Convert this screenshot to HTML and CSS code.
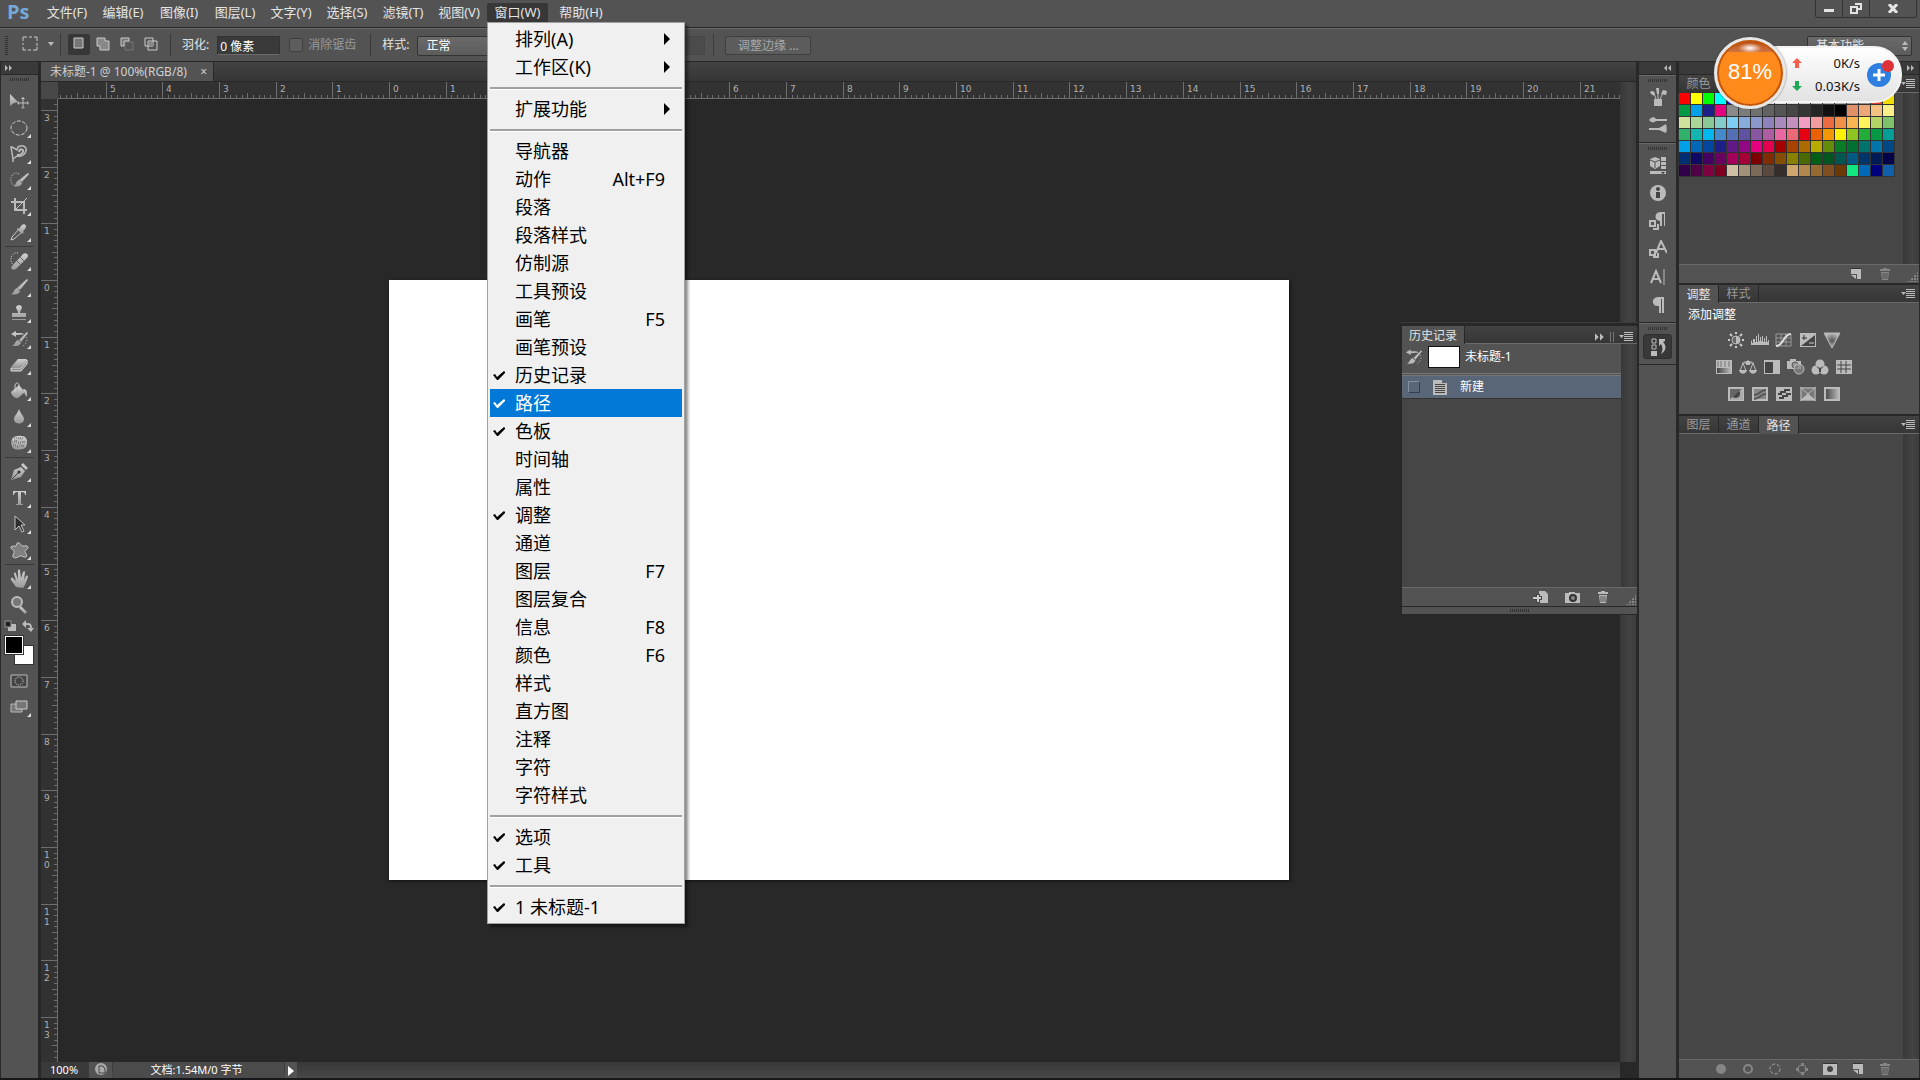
FILE: index.html
```
<!DOCTYPE html>
<html lang="zh-CN">
<head>
  <meta charset="UTF-8" />
  <title>未标题-1 @ 100%(RGB/8)</title>
  <meta name="viewport" content="width=device-width, initial-scale=1.0" />
  <link rel="stylesheet" href="styles.css">
</head>
<body>
  <!-- Shared icons -->
  <svg class="defs" aria-hidden="true">
    <defs>
      <linearGradient id="metal" x1="0" y1="0" x2="0" y2="1"><stop offset="0" stop-color="#d2d2d2"/><stop offset="1" stop-color="#999"/></linearGradient>
      <linearGradient id="fade" x1="0" y1="0" x2="1" y2="0"><stop offset="0" stop-color="#444"/><stop offset="1" stop-color="#bbb"/></linearGradient>
      <radialGradient id="spot"><stop offset="0" stop-color="#555"/><stop offset="1" stop-color="#bbb"/></radialGradient>
    </defs>
    <symbol id="i-menu" viewBox="0 0 14 10"><path d="M0 3h5l-2.500 3z M5 0h9v1H5z M5 2h9v1H5z M5 4h9v1H5z M5 6h9v1H5z M5 8h9v1H5z"/></symbol>
    <symbol id="i-right" viewBox="0 0 8 6"><path d="M0 0l3 3-3 3z M4 0l3 3-3 3z"/></symbol>
    <symbol id="i-left" viewBox="0 0 8 6"><path d="M3 0v6L0 3z M7 0v6L4 3z"/></symbol>
    <symbol id="i-check" viewBox="0 0 12 11"><path d="M0 5l2-1 2 3 7-6 1 1v1l-7 7H4z"/></symbol>
    <symbol id="i-sub" viewBox="0 0 6 12"><path d="M0 0l6 6-6 6z"/></symbol>
    <symbol id="i-new" viewBox="0 0 12 12"><path d="M1 0h10v11H7V6H1z M1 7h5v4z"/><path d="M1 0h10v1H1z" fill="#333"/></symbol>
    <symbol id="i-trash" viewBox="0 0 12 12"><path d="M4 0h4v1h3v2H1V1h3z M2 4h8l-1 8H3z"/><path d="M4 5v6M6 5v6M8 5v6" stroke="#535353"/></symbol>
    <symbol id="i-historybrush" viewBox="0 0 24 24"><path d="M4 7l5-3v2h5c2 0 3 1 3 2-2-1-5 0-8 0v2z M20 5l1 1-7 9-2-2z M11 13l3 3c-2 4-6 3-9 3 3-1 3-5 6-6z"/><path d="M19 10c2 3 0 7-3 9" fill="none" stroke="#c4c4c4" stroke-dasharray="1 2"/></symbol>
    <symbol id="i-pilcrow" viewBox="0 0 18 18"><path d="M15 1v16h-2V3h-1v14h-2v-7C2 11 2 1 9 1z"/></symbol>
  </svg>

  <header class="menubar">
    <span class="logo">Ps</span>
    <nav class="menus">
      <button>文件(F)</button>
      <button>编辑(E)</button>
      <button>图像(I)</button>
      <button>图层(L)</button>
      <button>文字(Y)</button>
      <button>选择(S)</button>
      <button>滤镜(T)</button>
      <button>视图(V)</button>
      <div class="menu-holder">
        <button class="open" aria-expanded="true">窗口(W)</button>
        <ul class="dropdown" id="windowMenu"></ul>
      </div>
      <button>帮助(H)</button>
    </nav>
    <div class="window-buttons">
      <button aria-label="最小化"><svg width="10" height="10"><path d="M0 5h10v3H0z"/></svg></button>
      <button aria-label="还原"><svg width="12" height="11"><path d="M5 1h6v5H8M1 4h6v6H1z" fill="none" stroke="#e4e4e4" stroke-width="2"/></svg></button>
      <button aria-label="关闭" class="wide"><svg width="10" height="9"><path d="M1 0l8 9M9 0L1 9" stroke="#e4e4e4" stroke-width="3"/></svg></button>
    </div>
  </header>

  <div class="options">
    <span class="grip-v"></span>
    <button class="preset" aria-label="矩形选框">
      <svg width="32" height="16"><path d="M1 5V1h4M7 1h3M12 1h3v4M15 7v3M15 11v3h-4M9 14H6M4 14H1v-3M1 9V7" fill="none" stroke="#ccc"/><path d="M26 6h6l-3 4z"/></svg>
    </button>
    <span class="vline"></span>
    <div class="modes">
      <button class="active" aria-label="新选区"><svg width="14" height="14"><path d="M2 1h9v10H2z" fill="#777" stroke="#ccc"/></svg></button>
      <button aria-label="添加到选区"><svg width="14" height="14"><path d="M1 1h8v3h4v9H4V9H1z" fill="#888" stroke="#ccc"/></svg></button>
      <button aria-label="从选区减去"><svg width="14" height="14"><path d="M5 5h8v8H5z" fill="#555" stroke="#777"/><path d="M9 1H1v8h3V4h5z" fill="#777" stroke="#ccc"/></svg></button>
      <button aria-label="与选区交叉"><svg width="14" height="14"><path d="M1 1h8v8H1z M4 4h9v9H4z" fill="none" stroke="#ccc"/><path d="M5 5h4v4H5z" fill="#888"/></svg></button>
    </div>
    <span class="vline"></span>
    <label class="field" for="feather">羽化:</label>
    <input class="text feather" id="feather" value="0 像素">
    <label class="anti"><input type="checkbox" disabled><span>消除锯齿</span></label>
    <span class="vline"></span>
    <label class="field" for="style">样式:</label>
    <select class="pick style" id="style"><option>正常</option></select>
    <input class="text size" aria-label="高度" disabled>
    <span class="vline"></span>
    <button class="edge" disabled>调整边缘 ...</button>
    <select class="pick workspace-pick" aria-label="工作区"><option>基本功能</option></select>
    <svg class="updown" width="6" height="12"><path d="M0 5l3-4 3 4z M0 7h6l-3 4z"/></svg>
  </div>

  <main class="main">
    <aside class="tools">
      <div class="strip"><svg width="8" height="6"><use href="#i-right"/></svg></div>
      <div class="tool-list">
        <span class="grip"></span>
        <button class="tool single" aria-label="移动"><svg><path d="M3 4l8 8-4 1-4 3z"/><path d="M16 8v10M11 13h10" stroke="#bbb"/><path d="M16 7l2 2h-4z M16 19l2-2h-4z M10 13l2-2v4z M22 13l-2-2v4z"/></svg></button>
        <button class="tool" aria-label="椭圆选框"><svg><ellipse cx="12" cy="12" rx="8" ry="7" fill="none" stroke="#d0d0d0" stroke-dasharray="4 1.500"/></svg></button>
        <button class="tool" aria-label="磁性套索"><svg><path d="M5 5l5 3 1-3c5-3 9 0 8 4s-5 6-9 5l-4 3-1-6-1-6zM6 17v3" fill="none" stroke="#bbb" stroke-width="1.500"/><path d="M12 10c1-4 5-3 4 0s-4 3-6 3" fill="none" stroke="#bbb" stroke-width="2"/></svg></button>
        <button class="tool" aria-label="快速选择"><svg><path d="M12 6c-5-3-9 2-8 7s5 6 8 4" fill="none" stroke="#d0d0d0" stroke-dasharray="1 1.500"/><path d="M21 5l1 1-7 8-3-2z M12 12l3 3c-1 4-5 4-8 3 2-1 2-5 5-6z"/></svg></button>
        <button class="tool" aria-label="裁剪"><svg><path d="M4 8h13v12M8 4v12h12" fill="none" stroke="#bbb" stroke-width="2"/><path d="M9 15L20 4" stroke="#ccc"/></svg></button>
        <button class="tool" aria-label="吸管"><svg><path d="M5 17l7-8 3 3-8 7-3 1z" fill="none" stroke="#ccc"/><path d="M14 6c3-4 7 0 4 3l-2 2 1 1-2 2-5-5 1-1 1 1z"/></svg></button>
        <hr>
        <button class="tool" aria-label="修复画笔"><svg><path d="M11 4c-4-1-7 2-7 6s1 5 3 6" fill="none" stroke="#ddd" stroke-dasharray="1 1.500"/><path d="M5 17L16 5c3-2 7 1 4 4L9 20c-4 2-6-1-4-3z"/><path d="M10 12l4 4M13 8l4 4" stroke="#666"/></svg></button>
        <button class="tool" aria-label="画笔"><svg><path d="M20 4l1 1-8 10-3-2z M10 13l3 3c-1 4-6 4-9 3 3-1 3-5 6-6z"/></svg></button>
        <button class="tool" aria-label="仿制图章"><svg><path d="M11 12c0-3-2-4-2-5 0-4 6-4 6 0 0 1-2 2-2 5h6v4H5v-4z M5 18h14v1H5z"/></svg></button>
        <button class="tool" aria-label="历史记录画笔"><svg><use href="#i-historybrush"/></svg></button>
        <button class="tool" aria-label="橡皮擦"><svg><path d="M4 14l7-8h9l-6 8z"/><path d="M4 15h10l6-8v4l-6 7H4z" fill="#929292" stroke="#ddd"/></svg></button>
        <button class="tool" aria-label="油漆桶"><svg><path d="M4 13l8-7 6 7-7 6c-3 1-7-3-7-6z"/><path d="M8 13V7c0-4 4-4 4 0v5" fill="none" stroke="#ccc"/><path d="M16 10c5 0 4 5 4 8l-2-2-1-4z"/></svg></button>
        <button class="tool" aria-label="模糊"><svg><path d="M12 4c1 4 5 7 5 10 0 6-10 6-10 0 0-3 4-6 5-10z"/></svg></button>
        <button class="tool" aria-label="海绵"><svg><path d="M5 8c2-4 12-4 14-1 2 3 1 9-1 10-4 2-10 2-12 0s-2-7-1-9z"/><path d="M7 9l3 1M12 7l3 2M16 11l2-1M6 13l3 1M11 12l3 1M15 15l2-1M10 16l2 1M8 11l3-3M5 11h14M6 15h12M7 7h10" stroke="#666" stroke-dasharray="1 1"/></svg></button>
        <hr>
        <button class="tool" aria-label="钢笔"><svg><path d="M4 20l3-10 7-3 4 4-4 6z M14 5l2-2 5 5-2 2z"/><path d="M5 19l6-6" stroke="#444"/><circle cx="12" cy="12" r="1.500" fill="#333"/></svg></button>
        <button class="tool" aria-label="文字"><svg><path d="M6 5h13v4h-1c0-2-1-3-4-3v11c0 1 1 1 2 1v1H9v-1c1 0 2 0 2-1V6c-3 0-4 1-4 3H6z"/></svg></button>
        <button class="tool" aria-label="路径选择"><svg><path d="M8 4v14l4-4 3 6 2-1-3-6h4z" fill="#2d2d2d" stroke="#c4c4c4"/></svg></button>
        <button class="tool" aria-label="自定形状"><svg><path d="M11 5c2-1 3 3 5 3s4-1 5 1-4 3-3 5 3 4 1 5-4-2-6-1-6 3-7 1 2-4 1-6-4-2-3-4 4 0 5-1 0-3 2-3z" fill="#808080" stroke="#ccc"/></svg></button>
        <hr>
        <button class="tool" aria-label="抓手"><svg><path d="M9 20l-5-7c-1-2 1-3 2-2l3 3-2-7c0-2 2-2 2 0l2 5V4c0-2 2-2 2 0l1 7 2-6c1-1 2-1 2 0l-1 8 2-4c1-1 2 0 2 1l-3 8-2 3z"/></svg></button>
        <button class="tool single" aria-label="缩放"><svg><path d="M14 13l6 6-2 2-6-6z"/><circle cx="10" cy="9" r="5" fill="#777" stroke="#bbb" stroke-width="2"/></svg></button>
        <div class="defaults">
          <svg width="30" height="12"><path d="M4 4h8v7H4z" fill="#bbb"/><path d="M1 1h6v6H1z" fill="#222" stroke="#999"/><path d="M20 4h4c3 0 3 2 3 6" fill="none" stroke="#bbb" stroke-width="2"/><path d="M22 0v8l-4-4z M23 8h7l-3 4z"/></svg>
        </div>
        <div class="colors"><span class="bg"></span><span class="fg"></span></div>
        <button class="tool single" aria-label="快速蒙版"><svg><path d="M4 6h16v12H4z" fill="#444" stroke="#bbb"/><circle cx="12" cy="12" r="4" fill="none" stroke="#ddd" stroke-dasharray="1 1"/></svg></button>
        <button class="tool" aria-label="屏幕模式"><svg><path d="M4 9h11v8H4z" fill="#777" stroke="#bbb"/><path d="M9 6h11v8H9z" fill="#777" stroke="#ccc"/></svg></button>
      </div>
    </aside>

    <section class="document">
      <div class="tabbar"><div class="doc-tab"><span>未标题-1 @ 100%(RGB/8)</span><button aria-label="关闭文档">×</button></div></div>
      <div class="view">
        <div class="corner"></div>
        <svg class="ruler-h" id="rulerH"></svg>
        <svg class="ruler-v" id="rulerV"></svg>
        <div class="workspace"><div class="paper" id="paper"></div></div>
        <div class="scroll"></div>
      </div>
      <footer class="status">
        <input class="zoom" aria-label="缩放比例" value="100%">
        <span class="drive"><svg width="13" height="13"><circle cx="6" cy="6" r="6" fill="#aaa"/><path d="M4 3h4l2 3v4H4z" fill="#aaa" stroke="#444"/></svg></span>
        <span class="size-info">文档:1.54M/0 字节</span>
        <button class="status-more" aria-label="更多"><svg width="6" height="10"><path d="M0 0l6 5-6 5z"/></svg></button>
      </footer>
    </section>

    <!-- Collapsed panels -->
    <aside class="dock">
      <div class="strip end"><svg width="8" height="6"><use href="#i-left"/></svg></div>
      <div class="dock-group">
        <span class="grip"></span>
        <button aria-label="画笔预设"><svg><path d="M5 11h8v8H5z"/><path d="M7 11L5 5M9 11V3M11 11l3-6" fill="none" stroke="#bbb"/><path d="M1 4c2-2 5-1 5 3-1 1-4 0-5-3z M7 0h3v6H8z M12 6l2-4 4 1-1 4z"/></svg></button>
        <button aria-label="画笔"><svg><path d="M0 4c2-3 5-4 7-1h11v2H7C5 7 2 7 0 4z M0 12h10l7-4c1 4 1 6 0 9l-7-3H0z"/></svg></button>
      </div>
      <div class="dock-group">
        <span class="grip"></span>
        <button aria-label="3D"><svg><path d="M6 1l5 2v7l-5 3-5-3V3z M12 1h5v4h-5z M12 6h5v3h-5z M12 10h5v3h-5z M1 15h16v3H1z"/><path d="M1 4l5 2 5-2M6 6v6" fill="none" stroke="#555"/><path d="M12 16h4l-2 2z" fill="#333"/></svg></button>
        <button aria-label="信息"><svg><circle cx="9" cy="9" r="8"/><path d="M7 8h4v6H7z" fill="#444"/><circle cx="9" cy="5" r="2" fill="#444"/></svg></button>
        <button aria-label="段落样式"><svg><path d="M16 0v14h-1V2h-2v12h-2V9C5 9 5 0 11 0z"/><path d="M1 9h5v5H1z M4 17h5v-5" fill="none" stroke="#bbb" stroke-width="2"/></svg></button>
        <button aria-label="字符样式"><svg><path d="M7 13l5-12 6 12M9 9h7" fill="none" stroke="#bbb" stroke-width="2"/><path d="M1 10h5v5H1z M4 17h5v-4" fill="none" stroke="#bbb" stroke-width="2"/></svg></button>
        <button aria-label="字符"><svg><path d="M2 15L7 3l5 12M4 11h6" fill="none" stroke="#bbb" stroke-width="2"/><path d="M15 1v16" stroke="#bbb"/></svg></button>
        <button aria-label="段落"><svg><use href="#i-pilcrow"/></svg></button>
      </div>
      <div class="dock-group">
        <span class="grip"></span>
        <button class="active" aria-label="历史记录"><svg><path d="M3 1h4v4H3z M3 7h4v4H3z" fill="none" stroke="#bbb"/><path d="M2 13h6v5H2z M10 1h6v2l-2 1c4 4 3 9-2 12 2-4 2-7 0-10l-2 2z"/></svg></button>
      </div>
      <div class="dock-rest"></div>
    </aside>

    <aside class="panels">
      <div class="strip end"><svg width="8" height="6"><use href="#i-right"/></svg></div>
      <section class="panel">
        <div class="tabs"><button>颜色</button><svg class="pm" width="14" height="10"><use href="#i-menu"/></svg></div>
        <div class="swatch-body"><div class="swatches" id="swatches"></div><div class="scroll"></div></div>
        <div class="panel-foot"><svg width="12" height="12"><use href="#i-new"/></svg><svg class="dim" width="12" height="12"><use href="#i-trash"/></svg><i class="resize"></i></div>
      </section>
      <section class="panel">
        <div class="tabs"><button class="on">调整</button><button>样式</button><svg class="pm" width="14" height="10"><use href="#i-menu"/></svg></div>
        <div class="adjust">
          <p>添加调整</p>
          <div class="adjust-row">
            <button aria-label="亮度"><svg><circle cx="9" cy="8" r="4" fill="#666" stroke="#bbb"/><path d="M9 4a4 4 0 0 1 0 8z"/><path d="M9 0v2M9 14v2M1 8h2M15 8h2M3 2l2 2M13 12l2 2M15 2l-2 2M5 12l-2 2" stroke="#ccc" stroke-width="2"/></svg></button>
            <button aria-label="色阶"><svg><path d="M0 13V9l1-1v3h1V7h2v3h1V4h1v6h1V2h1v7h1V5h1v4h1V4h1v6h1V6h1v4h1V4h1v6h1V8h1v5z"/></svg></button>
            <button aria-label="曲线"><svg><path d="M1 2h15v12H1zM6 2v12M11 2v12M1 6h15M1 10h15" fill="none" stroke="#999"/><path d="M1 14c8 0 7-12 15-12" fill="none" stroke="#ddd" stroke-width="2"/></svg></button>
            <button aria-label="曝光度"><svg><path d="M1 1h16v14H1z"/><path d="M2 14L16 3v11z" fill="#444"/><path d="M3 6h5M5 3v5" stroke="#333"/><path d="M10 11h5" stroke="#ccc"/></svg></button>
            <button aria-label="自然饱和度"><svg><path d="M1 1h16L9 16z" fill="url(#spot)" stroke="#bbb"/></svg></button>
          </div>
          <div class="adjust-row">
            <button aria-label="色相"><svg><path d="M1 1h16v14H1z"/><path d="M3 2v6M6 2v6M10 2v6M14 2v6" stroke="#777"/><path d="M2 9h14v5H2z" fill="url(#fade)"/></svg></button>
            <button aria-label="色彩平衡"><svg><path d="M9 1v4M3 4h12M4 4L1 12M4 4l3 8M14 4l-3 8M14 4l3 8M5 3h8" fill="none" stroke="#bbb"/><path d="M0 11h8c-1 5-7 5-8 0z M10 11h8c-1 5-7 5-8 0z M7 2h4v4H7z"/></svg></button>
            <button aria-label="黑白"><svg><path d="M1 1h16v14H1z"/><path d="M2 3h8v11H2z" fill="#444"/></svg></button>
            <button aria-label="照片滤镜"><svg><path d="M0 2h3V0h6v2h5v8H0z"/><circle cx="8" cy="6" r="3" fill="#999" stroke="#555"/><circle cx="12" cy="10" r="5" fill="#888" fill-opacity=".7" stroke="#bbb"/></svg></button>
            <button aria-label="通道混合器"><svg><circle cx="9" cy="5" r="4.500"/><circle cx="5" cy="11" r="4.500"/><circle cx="13" cy="11" r="4.500"/><path d="M5 7l4 2 4-2-3 3v3H8v-3z" fill="#444"/></svg></button>
            <button aria-label="颜色查找"><svg><path d="M1 1h16v14H1z"/><path d="M2 6h14M2 10h14M6 2v12M11 2v12" stroke="#444"/></svg></button>
          </div>
          <div class="adjust-row">
            <button aria-label="反相"><svg><path d="M2 2h14v12H2z" fill="#666" stroke="#bbb" stroke-width="2"/><path d="M2 14L16 2v12z" fill="#aaa"/><circle cx="9" cy="8" r="4" fill="#666"/><path d="M6 11l6-6c3 3-2 9-6 6z" fill="#444"/></svg></button>
            <button aria-label="色调分离"><svg><path d="M2 2h14v12H2z" fill="#888" stroke="#bbb" stroke-width="2"/><path d="M3 9c6 0 6-5 12-5M3 13c6 0 6-5 12-5" fill="none" stroke="#555" stroke-width="2"/></svg></button>
            <button aria-label="阈值"><svg><path d="M1 1h16v14H1z"/><path d="M3 8h3V6h4V4h5M4 12h4v-2h4V8h4" fill="none" stroke="#444" stroke-width="2"/></svg></button>
            <button aria-label="可选颜色"><svg><path d="M1 1h16v14H1z" fill="#777"/><path d="M1 1l8 7-8 7M17 1L9 8l8 7M2 2h14v12H2z" fill="none" stroke="#bbb"/><path d="M2 14l7-6 7 6z"/></svg></button>
            <button aria-label="渐变映射"><svg><path d="M2 2h14v12H2z" fill="url(#fade)" stroke="#bbb" stroke-width="2"/></svg></button>
          </div>
        </div>
      </section>
      <section class="panel grow">
        <div class="tabs"><button>图层</button><button>通道</button><button class="on">路径</button><svg class="pm" width="14" height="10"><use href="#i-menu"/></svg></div>
        <div class="paths-body"><div class="scroll"></div></div>
        <div class="panel-foot path-foot">
          <svg width="12" height="12"><circle cx="6" cy="6" r="5" fill="#858585"/></svg>
          <svg width="12" height="12"><circle cx="6" cy="6" r="4" fill="none" stroke="#858585" stroke-width="2"/></svg>
          <svg width="12" height="12"><circle cx="6" cy="6" r="5" fill="none" stroke="#aaa" stroke-dasharray="3 2"/></svg>
          <svg width="12" height="12"><circle cx="6" cy="6" r="4" fill="none" stroke="#858585"/><path d="M5 0h3v3H5z M5 9h3v3H5z M0 5h3v3H0z M9 5h3v3H9z" fill="#858585"/></svg>
          <svg width="14" height="12"><path d="M0 1h14v11H0z"/><path d="M0 0h14v1H0z" fill="#333"/><circle cx="7" cy="6" r="3" fill="#444"/></svg>
          <svg width="12" height="12"><use href="#i-new"/></svg>
          <svg class="dim" width="12" height="12"><use href="#i-trash"/></svg>
        </div>
      </section>
    </aside>

    <!-- Floating history panel -->
    <section class="history">
      <div class="tabs">
        <button class="on">历史记录</button>
        <div class="pm"><svg width="10" height="8" viewBox="0 0 8 6"><use href="#i-right"/></svg><span class="bars"></span><svg width="14" height="10"><use href="#i-menu"/></svg></div>
      </div>
      <div class="history-body">
        <div class="history-list">
          <div class="snapshot"><svg width="18" height="18" viewBox="3 3 19 18"><use href="#i-historybrush" width="24" height="24"/></svg><span class="thumb"></span><span>未标题-1</span></div>
          <div class="state"><i class="box"></i><svg width="14" height="16"><path d="M0 1h9v3h5v12H0z"/><path d="M2 5h10v1H2z M2 7h10v1H2z M2 9h10v1H2z M2 11h10v1H2z M2 13h10v1H2z" fill="#444"/></svg><span>新建</span></div>
        </div>
        <div class="scroll"></div>
      </div>
      <div class="panel-foot">
        <svg width="15" height="12"><path d="M6 0h6l3 3v9H6z"/><path d="M0 7h9M5 3v9" stroke="#444" stroke-width="4"/><path d="M0 7h8M5 4v7" stroke="#ccc" stroke-width="2"/></svg>
        <svg width="15" height="12"><path d="M0 2h4V1h6v1h5v10H0z"/><circle cx="8" cy="7" r="3" fill="#888" stroke="#333" stroke-width="2"/></svg>
        <svg width="12" height="12"><use href="#i-trash"/></svg>
        <i class="resize"></i>
      </div>
      <div class="bottom-grip"><span class="grip"></span></div>
    </section>
  </main>

  <!-- Network speed widget -->
  <div class="speed">
    <div class="rates">
      <div><svg width="10" height="10"><path d="M5 0l5 5H7v5H3V5H0z" fill="#f4604c"/></svg><span>0K/s</span></div>
      <div><svg width="10" height="10"><path d="M5 10L0 5h3V0h4v5h3z" fill="#22a657"/></svg><span>0.03K/s</span></div>
    </div>
    <button class="plus" aria-label="加速"><svg width="26" height="26"><circle cx="13" cy="13" r="12" fill="#2f7fe0"/><path d="M13 7v12M7 13h12" stroke="#fff" stroke-width="3"/></svg></button>
    <i class="dot"></i>
    <div class="ball">81%</div>
  </div>

  <script src="app.js"></script>
</body>
</html>
```
FILE: styles.css
```
:root {
  --chrome: #535353;
  --dark: #282828;
  --header: #3c3c3c;
  --body: #464646;
  --light: #6a6a6a;
  --icon: #bbb;
}

* {
  box-sizing: border-box;
}

body {
  margin: 0;
  height: 100vh;
  display: flex;
  flex-direction: column;
  overflow: hidden;
  background: #16181b;
  padding-bottom: 2px;
  color: #e4e4e4;
  font: 12px/16px "Noto Sans", "Noto Sans CJK SC", sans-serif;
}

button, input, select {
  font: inherit;
  color: inherit;
  margin: 0;
  padding: 0;
  border: 0;
  background: none;
}

svg {
  display: block;
  fill: var(--icon);
  flex: none;
}

.defs {
  position: absolute;
  width: 0;
  height: 0;
}

/* Menu bar */
.menubar {
  flex: none;
  display: flex;
  height: 28px;
  background: var(--chrome);
  border-bottom: 1px solid var(--dark);
}

.logo {
  width: 39px;
  padding-left: 7px;
  color: #75a7d8;
  font: bold 20px/24px "Open Sans", sans-serif;
}

.menus {
  display: flex;
  height: 19px;
  margin-top: 3px;
  font-size: 13px;
  line-height: 19px;
}

.menus > button {
  width: 56px;
  height: 19px;
  white-space: nowrap;
}

.menus .open {
  width: 61px;
  height: 19px;
  background: #373737;
  border-radius: 2px 2px 0 0;
}

.menu-holder {
  position: relative;
  margin-right: 5px;
}

.dropdown {
  position: absolute;
  z-index: 20;
  top: 19px;
  left: 0;
  width: 198px;
  margin: 0;
  padding: 2px;
  list-style: none;
  background: #f0f0f0;
  border: 1px solid #a0a0a0;
  box-shadow: 3px 3px 3px rgba(0, 0, 0, 0.45);
  color: #000;
  font-size: 18px;
}

.dropdown button {
  display: grid;
  grid-template-columns: 25px 1fr auto;
  align-items: center;
  width: 100%;
  height: 28px;
  padding: 0 17px 0 0;
  text-align: left;
  line-height: 28px;
}

.dropdown svg {
  fill: #000;
}

.dropdown .sub {
  padding-right: 12px;
}

.dropdown .hover {
  background: #0078d7;
  color: #fff;
}

.dropdown .check {
  padding-left: 3px;
}

.dropdown .hover svg {
  fill: #fff;
}

.dropdown .sep {
  height: 14px;
  padding-top: 6px;
}

.dropdown .sep::before {
  content: "";
  display: block;
  height: 2px;
  background: #a0a0a0;
  border-bottom: 1px solid #fff;
}

.window-buttons {
  display: flex;
  margin: 0 3px 0 auto;
  height: 18px;
  border: 1px solid #333;
  border-top: 0;
  border-radius: 0 0 3px 3px;
}

.window-buttons button {
  display: flex;
  align-items: center;
  justify-content: center;
  width: 27px;
  border-right: 1px solid #333;
}

.window-buttons .wide {
  width: 46px;
  border: 0;
}

.window-buttons svg {
  fill: #e4e4e4;
}

/* Options bar */
.options {
  flex: none;
  display: flex;
  align-items: flex-start;
  height: 34px;
  padding: 7px 8px 0 5px;
  background: var(--chrome);
  border-top: 1px solid var(--light);
  border-bottom: 1px solid var(--dark);
  line-height: 18px;
}

.grip-v {
  width: 3px;
  height: 20px;
  margin-right: 14px;
  background: repeating-linear-gradient(#333 0 1px, transparent 1px 2px);
}

.preset {
  margin-right: 6px;
}

.vline {
  width: 1px;
  height: 22px;
  margin-top: -2px;
  background: #3a3a3a;
}

.modes {
  display: flex;
  gap: 2px;
  margin: -2px 8px 0 7px;
}

.modes button {
  display: flex;
  justify-content: center;
  width: 22px;
  height: 21px;
  padding-top: 3px;
  border-radius: 2px;
}

.modes .active {
  background: #373737;
}

.field {
  margin: 0 8px 0 11px;
}

.text {
  height: 19px;
  background: #3a3a3a;
  border: 1px solid #333;
  border-bottom-color: var(--light);
}

.feather {
  width: 63px;
  padding-left: 2px;
  color: #fff;
}

.anti {
  display: flex;
  gap: 5px;
  margin: 0 14px 0 9px;
  color: #999;
}

.anti input {
  appearance: none;
  width: 14px;
  height: 14px;
  margin-top: 2px;
  background: #5e5e5e;
  border: 1px solid #3f3f3f;
  border-radius: 2px;
}

.pick {
  appearance: none;
  height: 20px;
  padding-left: 8px;
  background: linear-gradient(#6a6a6a, #5c5c5c);
  border: 1px solid #333;
  border-radius: 2px;
}

.style {
  width: 100px;
  color: #fff;
}

.size {
  width: 80px;
  margin: 0 8px 0 108px;
  background: #4b4b4b;
  border-color: #474747;
}

.edge {
  width: 86px;
  height: 19px;
  margin-left: 11px;
  background: #5c5c5c;
  border: 1px solid #3f3f3f;
  border-radius: 2px;
  color: #a8a8a8;
  line-height: 16px;
}

.workspace-pick {
  width: 105px;
  margin-left: auto;
}

.updown {
  margin: 4px 4px 0 -10px;
}

/* Frame */
.main {
  position: relative;
  flex: 1;
  min-height: 0;
  display: flex;
  padding: 0 1px;
  background: var(--dark);
}

.strip {
  flex: none;
  display: flex;
  align-items: center;
  height: 12px;
  padding: 0 4px;
  background: #3a3a3a;
  margin-bottom: 1px;
}

.strip.end {
  justify-content: flex-end;
}

.grip {
  display: block;
  width: 19px;
  height: 3px;
  background: repeating-linear-gradient(90deg, #333 0 1px, transparent 1px 2px);
}

.scroll {
  flex: none;
  width: 16px;
  background: linear-gradient(90deg, #383838, #434343 60%, #3c3c3c);
}

.tools {
  display: flex;
  flex-direction: column;
  width: 37px;
  margin-right: 3px;
}

.tool-list {
  flex: 1;
  display: flex;
  flex-direction: column;
  padding-top: 3px;
  background: var(--chrome);
}

.tool-list .grip {
  margin: 0 0 8px 9px;
}

.tool {
  position: relative;
  display: flex;
  align-items: center;
  justify-content: center;
  height: 26px;
  padding-right: 2px;
}

.tool svg {
  width: 24px;
  height: 24px;
  fill: url(#metal);
}

.tool::after {
  content: "";
  position: absolute;
  right: 7px;
  bottom: 3px;
  border: 2px solid;
  border-color: transparent #ddd #ddd transparent;
}

.tool.single::after {
  content: none;
}

.tool-list hr {
  width: 29px;
  height: 1px;
  margin: 1px auto;
  border: 0;
  background: #3a3a3a;
}

.defaults {
  padding: 2px 0 0 3px;
  height: 17px;
}

.colors {
  position: relative;
  height: 32px;
  margin-bottom: 1px;
}

.colors span {
  position: absolute;
  width: 18px;
  height: 18px;
  border: 1px solid #fff;
  outline: 1px solid #333;
}

.colors .fg {
  left: 4px;
  top: 1px;
  background: #000;
}

.colors .bg {
  left: 14px;
  top: 11px;
  background: #fff;
}

/* Document */
.document {
  flex: 1;
  min-width: 0;
  display: flex;
  flex-direction: column;
  margin-right: 3px;
}

.tabbar {
  flex: none;
  height: 20px;
  background: linear-gradient(#424242, #363636);
  border-bottom: 1px solid var(--dark);
}

.doc-tab {
  display: flex;
  justify-content: space-between;
  width: 173px;
  height: 19px;
  padding: 0 6px 0 9px;
  background: var(--chrome);
  border-right: 1px solid var(--dark);
  line-height: 20px;
  color: #d0d0d0;
}

.doc-tab button {
  line-height: 16px;
}

.view {
  flex: 1;
  min-height: 0;
  display: grid;
  grid-template: 17px 1fr / 17px 1fr 16px;
}

.corner {
  background: #484848;
}

.ruler-h, .ruler-v {
  width: 100%;
  height: 100%;
  background: #323232;
  overflow: hidden;
  font: 9px "DejaVu Sans", sans-serif;
  fill: #b0b0b0;
}

.view .scroll {
  grid-area: 1 / 3 / 3 / 4;
}

.workspace {
  display: flex;
  align-items: center;
  justify-content: center;
  padding-bottom: 1px;
  background: var(--dark);
}

.paper {
  width: 900px;
  height: 600px;
  background: #fff;
  box-shadow: 1px 1px 3px #111;
}

.status {
  flex: none;
  display: flex;
  height: 16px;
  margin-right: 16px;
  background: linear-gradient(#383838, #484848);
  color: #fff;
  font-size: 11px;
  line-height: 16px;
}

.zoom {
  width: 48px;
  padding-left: 9px;
  background: #3a3a3a;
}

.drive {
  width: 23px;
  padding: 1px 0 0 6px;
  background: var(--chrome);
}

.size-info {
  width: 171px;
  margin: 0 1px;
  padding-right: 4px;
  background: #4b4b4b;
  text-align: center;
}

.status-more {
  width: 12px;
  padding: 2px 0 0 3px;
  background: var(--chrome);
}

.status-more svg {
  fill: #fff;
}

/* Collapsed dock */
.dock {
  display: flex;
  flex-direction: column;
  width: 37px;
  margin-right: 3px;
}

.dock-group {
  display: flex;
  flex-direction: column;
  align-items: center;
  padding: 3px 0;
  margin-bottom: 1px;
  background: var(--chrome);
  border-top: 1px solid var(--light);
}

.dock-group .grip {
  margin-bottom: 1px;
}

.dock-group button {
  display: flex;
  align-items: center;
  justify-content: center;
  width: 29px;
  height: 28px;
}

.dock-group .active {
  height: 25px;
  margin: 3px 0 2px;
  background: #383838;
  border: 1px solid #303030;
  border-radius: 3px;
}

.dock-group svg {
  width: 18px;
  height: 18px;
}

.dock-rest {
  flex: 1;
  background: var(--chrome);
}

/* Panels */
.panels {
  display: flex;
  flex-direction: column;
  width: 240px;
}

.panel {
  margin-bottom: 2px;
}

.panel.grow {
  flex: 1;
  display: flex;
  flex-direction: column;
  margin: 0;
}

.tabs {
  flex: none;
  display: flex;
  height: 18px;
  background: linear-gradient(#424242, #363636);
  border-bottom: 1px solid var(--light);
}

.tabs button {
  width: 40px;
  border-right: 1px solid var(--dark);
  color: #999;
  line-height: 17px;
}

.tabs .on {
  height: 18px;
  background: var(--chrome);
  color: #e4e4e4;
}

.tabs .pm {
  display: flex;
  align-items: center;
  gap: 5px;
  margin: 4px 4px 0 auto;
}

.swatch-body {
  display: flex;
  height: 171px;
  background: var(--body);
}

.swatches {
  flex: 1;
  display: grid;
  grid-template-columns: repeat(18, 11px);
  grid-auto-rows: 11px;
  align-content: start;
  gap: 1px;
}

.swatches i {
  outline: 1px solid #333;
}

.swatch-body .scroll {
  margin-left: auto;
}

.panel-foot {
  flex: none;
  display: flex;
  align-items: center;
  justify-content: flex-end;
  gap: 17px;
  height: 19px;
  background: var(--chrome);
  border-top: 1px solid var(--light);
}

.dim {
  fill: #858585;
}

.resize {
  width: 10px;
  height: 10px;
  margin: 6px 1px 0 0;
  background: radial-gradient(circle at 1px 1px, #888 1px, transparent 1px) 0 0 / 3px 3px;
  clip-path: polygon(100% 0, 100% 100%, 0 100%);
}

.adjust {
  height: 111px;
  background: var(--chrome);
}

.adjust p {
  margin: 0;
  padding: 4px 0 4px 9px;
  color: #fff;
}

.adjust-row {
  display: flex;
  justify-content: center;
  gap: 6px;
  height: 27px;
  padding-right: 30px;
}

.adjust-row svg {
  width: 18px;
  height: 17px;
}

.paths-body {
  flex: 1;
  display: flex;
  justify-content: flex-end;
  background: var(--body);
}

.path-foot {
  gap: 15px;
  padding-right: 28px;
}

/* History */
.history {
  position: absolute;
  top: 260px;
  right: 282px;
  width: 237px;
  padding: 3px 1px 1px;
  background: var(--dark);
  border-top: 1px solid #3c3c3c;
}

.history .tabs button {
  width: 63px;
}

.bars {
  flex: none;
  width: 4px;
  height: 10px;
  border: 1px solid #777;
  border-width: 0 1px;
}

.history-body {
  display: flex;
  height: 243px;
  background: var(--body);
}

.history-list {
  flex: 1;
}

.snapshot {
  display: flex;
  align-items: center;
  gap: 5px;
  height: 32px;
  padding: 0 0 3px 3px;
  background: var(--chrome);
  border-bottom: 3px double #777;
  color: #fff;
}

.thumb {
  width: 32px;
  height: 22px;
  background: #fff;
  border: 1px solid #111;
}

.state {
  display: flex;
  align-items: center;
  gap: 13px;
  height: 23px;
  padding-left: 6px;
  background: #596678;
  border-bottom: 1px solid #333;
  color: #fff;
}

.box {
  width: 12px;
  height: 12px;
  border: 1px solid #333f50;
  border-top-color: #8290a2;
  border-left-color: #8290a2;
}

.bottom-grip {
  display: flex;
  justify-content: center;
  height: 7px;
  margin-top: 1px;
  padding-top: 2px;
  background: var(--chrome);
}

/* Speed widget */
.speed {
  position: absolute;
  z-index: 10;
  top: 46px;
  right: 18px;
  display: flex;
  align-items: center;
  width: 160px;
  height: 57px;
  padding-left: 48px;
  border-radius: 28px;
  background: linear-gradient(#fff, #e2e2e2);
  border: 2px solid #f4f4f4;
  color: #111;
  font-size: 13px;
}

.rates {
  width: 68px;
}

.rates div {
  display: flex;
  align-items: center;
  justify-content: space-between;
  height: 23px;
}

.plus {
  margin-left: 6px;
}

.dot {
  position: absolute;
  right: 6px;
  top: 12px;
  width: 12px;
  height: 12px;
  border-radius: 50%;
  background: #df3236;
}

.ball {
  position: absolute;
  left: -30px;
  top: -11px;
  width: 72px;
  height: 72px;
  border: 3px solid #e8e8e8;
  border-radius: 50%;
  background: radial-gradient(ellipse 12px 5px at 50% 8px, #fff, transparent), linear-gradient(#b94a0c, #cf7444 12px, #ff8a1c 12px, #ff8a1c);
  box-shadow: inset 0 0 0 2px #c4560c, 0 0 2px #444;
  color: #fff;
  font: 22px/64px "Liberation Sans", sans-serif;
  text-align: center;
}
```
FILE: app.js
```
// [label, shortcut, flags]  c = checked, s = submenu, h = hovered
const windowMenu = [
  ["排列(A)", "", "s"], ["工作区(K)", "", "s"], null,
  ["扩展功能", "", "s"], null,
  ["导航器"], ["动作", "Alt+F9"], ["段落"], ["段落样式"], ["仿制源"], ["工具预设"],
  ["画笔", "F5"], ["画笔预设"], ["历史记录", "", "c"], ["路径", "", "ch"], ["色板", "", "c"],
  ["时间轴"], ["属性"], ["调整", "", "c"], ["通道"], ["图层", "F7"], ["图层复合"],
  ["信息", "F8"], ["颜色", "F6"], ["样式"], ["直方图"], ["注释"], ["字符"], ["字符样式"], null,
  ["选项", "", "c"], ["工具", "", "c"], null,
  ["1 未标题-1", "", "c"],
];

document.getElementById("windowMenu").innerHTML = windowMenu.map(item => {
  if (!item) return '<li class="sep"></li>';
  const [label, key = "", flags = ""] = item;
  const cls = (flags.includes("s") ? "sub " : "") + (flags.includes("h") ? "hover" : "");
  const check = flags.includes("c") ? '<svg width="12" height="11"><use href="#i-check"/></svg>' : "";
  const end = flags.includes("s") ? '<svg width="6" height="12"><use href="#i-sub"/></svg>' : key;
  return `<li><button class="${cls}"><span class="check">${check}</span><span>${label}</span><span>${end}</span></button></li>`;
}).join("");

const swatches = `
ff0000 ffff00 00ff00 00ffff 0000ff ff00ff ffffff ebebeb e1e1e1 d7d7d7 cccccc c2c2c2 b7b7b7 acacac a0a0a0 959595 e0402c f0dc00
009944 00a0e9 1d2088 e4007f 8a8a8a 7d7d7d 707070 626262 555555 464646 363636 262626 111111 000000 e08f6b eda878 f2c080 faf08a
cfe19b acd598 8ac997 84ccc9 7ecef4 88abda 8c97cb 8f82bc aa89bd c490bf f19ec2 f29c9f ec6941 f19149 f8b551 fff45c b3d465 80c269
32b16c 13b5b1 00b7ee 448aca 556fb5 5f52a0 8957a1 ae5da1 ea68a2 eb6877 e60012 eb6100 f39800 fff100 8fc31f 22ac38 009944 009e96
00a0e9 0068b7 00479d 1d2088 601986 920783 e4007f e5004f a40000 a84200 ac6a00 b7aa00 638c0b 097c25 007130 00736d 0075a9 004986
002e73 100964 440062 6a005f a4005b a40035 7d0000 7f2d00 834e00 8a8000 486a00 005e15 005520 005752 005982 003567 001c58 03004c
31004a 500047 7e0043 7d0022 cfbfa5 a2917a 7b6a58 59493f 362c2a cea66d b1864f 956a33 7f4f21 6a3906 12e67f 0068b7 00007f 0f60a8`;

document.getElementById("swatches").innerHTML =
  swatches.trim().split(/\s+/).map(c => `<i style="background:#${c}"></i>`).join("");

const CM = 56.7; // pixels per centimetre

function drawRuler(svg, origin, length, vertical) {
  let out = "";
  const size = 17;
  for (let i = Math.ceil(-origin / CM * 10); i * CM / 10 + origin < length; i++) {
    const p = Math.round(origin + i * CM / 10) + 0.5;
    const len = i % 10 === 0 ? size : i % 5 === 0 ? 6 : 4;
    out += vertical
      ? `<path d="M${size - len} ${p}H${size}" stroke="#6e6e6e"/>`
      : `<path d="M${p} ${size - len}V${size}" stroke="#6e6e6e"/>`;
    if (i % 10 === 0) {
      const label = String(Math.abs(i / 10));
      if (vertical) {
        [...label].forEach((d, n) => out += `<text x="3" y="${p + 10.5 + n * 10}">${d}</text>`);
      } else {
        out += `<text x="${p + 3.5}" y="10">${label}</text>`;
      }
    }
  }
  out += vertical
    ? `<path d="M16.5 0V${length}" stroke="#6e6e6e"/>`
    : `<path d="M0 16.5H${length}" stroke="#6e6e6e"/>`;
  svg.innerHTML = out;
}

function drawRulers() {
  const h = document.getElementById("rulerH");
  const v = document.getElementById("rulerV");
  const paper = document.getElementById("paper").getBoundingClientRect();
  const hb = h.getBoundingClientRect();
  const vb = v.getBoundingClientRect();
  drawRuler(h, paper.left - hb.left, hb.width, false);
  drawRuler(v, paper.top - vb.top, vb.height, true);
}

drawRulers();
window.addEventListener("resize", drawRulers);
```
